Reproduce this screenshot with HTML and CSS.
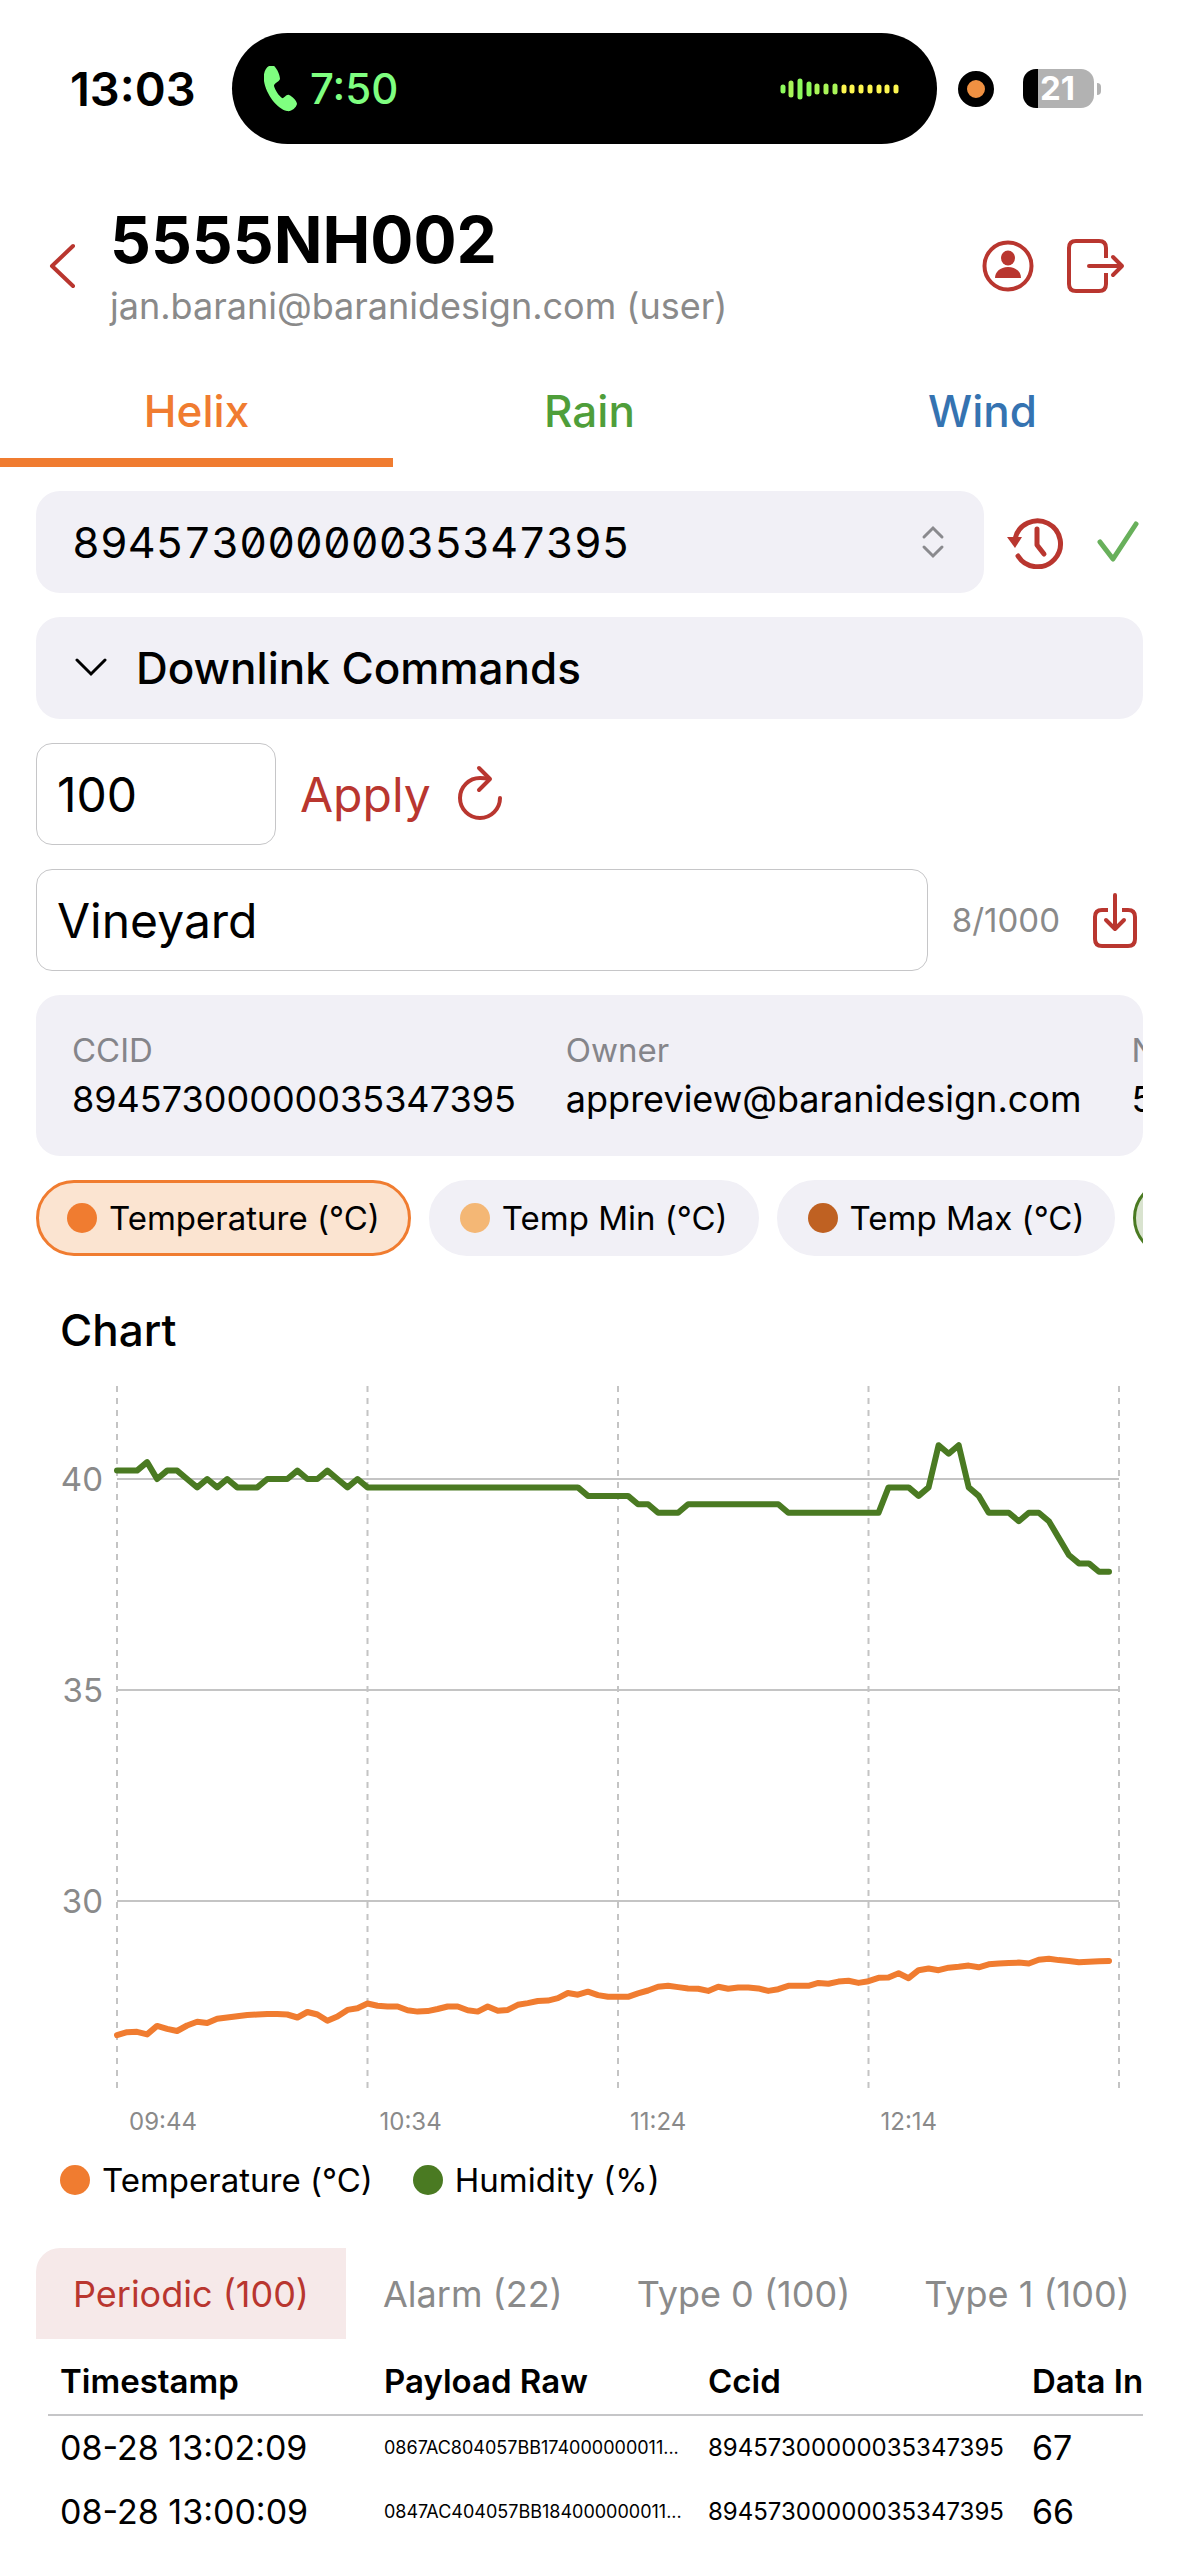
FILE: index.html
```html
<!DOCTYPE html>
<html lang="en">
<head>
  <meta charset="UTF-8">
  <title>5555NH002</title>
  <link rel="stylesheet" href="styles.css">
</head>
<body>

  <div class="status-bar">
    <span class="clock">13:03</span>
    <div class="island">
      <svg class="icon-phone" width="34" height="46" viewBox="0 0 34 46">
        <path d="M5 0C1 2-1 8 0 15c2 13 13 28 23 30 4 1 9-3 10-7 0-3-5-8-8-9-3-1-5 4-7 3-3-2-7-8-8-12 0-3 5-4 6-7 0-4-3-10-5-12-1-2-4-2-6-1z" fill="#7fff80"/>
      </svg>
      <span class="call-time">7:50</span>
      <svg class="wave" width="120" height="22" viewBox="0 0 120 22" stroke-width="5" stroke-linecap="round">
        <path d="M3 9v4M20 3v16M29 6v10" stroke="#8dfa5c"/>
        <path d="M11 5v12M37 8v6M46 8v6M55 8v6" stroke="#a9f558"/>
        <path d="M64 9v4M72 9v4M81 9v4M90 9v4M99 9v4M107 9v4M116 9v4" stroke="#fdf650"/>
      </svg>
    </div>
    <span class="mic-dot"></span>
    <div class="battery">
      <span class="battery-body">21</span>
      <span class="battery-tip"></span>
    </div>
  </div>

  <header class="header">
    <button class="icon-btn back" aria-label="Back">
      <svg width="28" height="48" viewBox="0 0 28 48"><path d="M25 4L4 24l21 20"/></svg>
    </button>
    <div class="titles">
      <h1>5555NH002</h1>
      <p>jan.barani@baranidesign.com (user)</p>
    </div>
    <button class="icon-btn" aria-label="Account">
      <svg width="54" height="54" viewBox="0 0 54 54">
        <circle cx="27" cy="27" r="23.500"/>
        <ellipse class="solid" cx="27" cy="19" rx="7" ry="7.500"/>
        <path class="solid" d="M14 39c0-6 5-11 13-11s13 5 13 11z"/>
      </svg>
    </button>
    <button class="icon-btn" aria-label="Sign out">
      <svg width="60" height="56" viewBox="0 0 60 56">
        <path d="M41 20V10q0-7-7-7H11q-7 0-7 7v36q0 7 7 7h23q7 0 7-7V35" stroke-linecap="butt"/>
        <path d="M24 28h33M48 19l9 9-9 9"/>
      </svg>
    </button>
  </header>

  <nav class="tabs">
    <button class="tab helix active">Helix</button>
    <button class="tab rain">Rain</button>
    <button class="tab wind">Wind</button>
  </nav>

  <main class="content">
    <div class="row">
      <div class="picker">
        <select aria-label="Device CCID">
          <option>89457300000035347395</option>
        </select>
        <svg width="26" height="36" viewBox="0 0 26 36"><path d="M4 13l9-9 9 9M4 23l9 9 9-9"/></svg>
      </div>
      <button class="icon-btn history" aria-label="History">
        <svg width="58" height="54" viewBox="0 0 58 54">
          <path d="M9 24a23 23 0 1 1 3 17"/>
          <path class="solid" d="M1 22h15l-7 11z"/>
          <path d="M31 14v16l7 9"/>
        </svg>
      </button>
      <svg class="check" width="44" height="44" viewBox="0 0 44 44"><path d="M4 22l13 17L40 4"/></svg>
    </div>

    <button class="panel disclosure">
      <svg width="34" height="20" viewBox="0 0 34 20"><path d="M3 2l14 14L31 2"/></svg>
      Downlink Commands
    </button>

    <div class="row">
      <input class="count" type="text" value="100" aria-label="Row count">
      <button class="apply">Apply</button>
      <button class="icon-btn refresh" aria-label="Refresh">
        <svg width="50" height="58" viewBox="0 0 50 58">
          <path d="M45 33a20 20 0 1 1-20-20q5 0 9 1"/>
          <path d="M24 3l11 11-11 11"/>
        </svg>
      </button>
    </div>

    <div class="row">
      <input class="note" type="text" value="Vineyard" aria-label="Note">
      <span class="counter">8/1000</span>
      <button class="icon-btn save" aria-label="Save note">
        <svg width="50" height="58" viewBox="0 0 50 58">
          <path d="M18 19h-6q-7 0-7 7v22q0 7 7 7h26q7 0 7-7V26q0-7-7-7h-6" stroke-linecap="butt"/>
          <path d="M25 4v33M16 29l9 9 9-9"/>
        </svg>
      </button>
    </div>

    <dl class="panel info">
      <div><dt>CCID</dt><dd>89457300000035347395</dd></div>
      <div><dt>Owner</dt><dd>appreview@baranidesign.com</dd></div>
      <div><dt>Name</dt><dd>5555NH002</dd></div>
    </dl>

    <div class="chips">
      <button class="chip on-orange"><span class="dot orange"></span>Temperature (°C)</button>
      <button class="chip"><span class="dot sand"></span>Temp Min (°C)</button>
      <button class="chip"><span class="dot brown"></span>Temp Max (°C)</button>
      <button class="chip on-green"><span class="dot green"></span>Humidity (%)</button>
    </div>

    <section class="chart">
      <h2>Chart</h2>
      <svg id="plot" viewBox="0 0 1107 764"></svg>
      <div class="legend">
        <span><i class="dot orange"></i>Temperature (°C)</span>
        <span><i class="dot green"></i>Humidity (%)</span>
      </div>
    </section>

    <div class="data-tabs">
      <button class="data-tab active">Periodic (100)</button>
      <button class="data-tab">Alarm (22)</button>
      <button class="data-tab">Type 0 (100)</button>
      <button class="data-tab">Type 1 (100)</button>
    </div>

    <div class="table-wrap">
      <table>
        <thead>
          <tr><th>Timestamp</th><th>Payload Raw</th><th>Ccid</th><th>Data Interval</th></tr>
        </thead>
        <tbody>
          <tr><td>08-28 13:02:09</td><td class="raw">0867AC804057BB174000000011...</td><td class="ccid">89457300000035347395</td><td>67</td></tr>
          <tr><td>08-28 13:00:09</td><td class="raw">0847AC404057BB184000000011...</td><td class="ccid">89457300000035347395</td><td>66</td></tr>
        </tbody>
      </table>
    </div>
  </main>

  <script>
    const temperature = [
      26.82, 26.89, 26.90, 26.84, 27.04, 26.97, 26.92, 27.05, 27.14, 27.11,
      27.21, 27.24, 27.27, 27.30, 27.31, 27.32, 27.32, 27.31, 27.24, 27.37,
      27.31, 27.16, 27.26, 27.42, 27.46, 27.57, 27.52, 27.50, 27.50, 27.41,
      27.38, 27.39, 27.44, 27.50, 27.50, 27.41, 27.38, 27.50, 27.40, 27.42,
      27.54, 27.58, 27.63, 27.64, 27.70, 27.82, 27.78, 27.85, 27.77, 27.73,
      27.73, 27.73, 27.81, 27.88, 27.97, 27.99, 27.96, 27.93, 27.92, 27.87,
      27.97, 27.92, 27.95, 27.95, 27.93, 27.87, 27.91, 27.99, 27.99, 27.99,
      28.06, 28.04, 28.09, 28.11, 28.06, 28.10, 28.18, 28.19, 28.29, 28.17,
      28.36, 28.40, 28.36, 28.42, 28.44, 28.47, 28.43, 28.50, 28.52, 28.53,
      28.54, 28.52, 28.61, 28.63, 28.60, 28.58, 28.55, 28.56, 28.57, 28.58
    ];
    const humidity = [
      40.2, 40.2, 40.2, 40.4, 40, 40.2, 40.2, 40, 39.8, 40,
      39.8, 40, 39.8, 39.8, 39.8, 40, 40, 40, 40.2, 40,
      40, 40.2, 40, 39.8, 40, ...Array(22).fill(39.8), 39.6, 39.6, 39.6,
      39.6, 39.6, 39.4, 39.4, 39.2, 39.2, 39.2, ...Array(10).fill(39.4),
      ...Array(10).fill(39.2), 39.8, 39.8, 39.8,
      39.6, 39.8, 40.8, 40.6, 40.8, 39.8, 39.6, 39.2, 39.2, 39.2,
      39, 39.2, 39.2, 39, 38.6, 38.2, 38, 38, 37.8, 37.8
    ];

    const plot = document.getElementById("plot");
    const left = 81, right = 1083, top0 = 4, bottom = 708;
    const x = i => left + i * (right - left) / 100;
    const y = v => 97 + (40 - v) * 42.2;

    function add(tag, attrs, text) {
      const el = document.createElementNS("http://www.w3.org/2000/svg", tag);
      for (const k in attrs) el.setAttribute(k, attrs[k]);
      if (text) el.textContent = text;
      plot.appendChild(el);
    }

    // grid and axis labels
    [40, 35, 30].forEach(v => {
      add("line", { class: "grid", x1: left, x2: right, y1: y(v), y2: y(v) });
      add("text", { class: "y-label", x: left - 14, y: y(v) + 12 }, String(v));
    });
    ["09:44", "10:34", "11:24", "12:14", ""].forEach((t, n) => {
      add("line", { class: "grid dashed", x1: x(n * 25), x2: x(n * 25), y1: top0, y2: bottom });
      add("text", { class: "x-label", x: x(n * 25) + 12, y: bottom + 40 }, t);
    });

    // series
    const points = data => data.map((v, i) => x(i).toFixed(1) + "," + y(v).toFixed(1)).join(" ");
    add("polyline", { class: "line temp", points: points(temperature) });
    add("polyline", { class: "line hum", points: points(humidity) });
  </script>

</body>
</html>
```
FILE: styles.css
```css
* {
  box-sizing: border-box;
}
body {
  margin: 0;
  min-height: 100vh;
  background: #fff;
  color: #000;
  font-family: Inter, "Noto Sans", sans-serif;
  font-size: 33px;
  overflow-x: hidden;
}
button, input, select {
  font-family: inherit;
  font-size: inherit;
  color: inherit;
  background: none;
  border: none;
  margin: 0;
  padding: 0;
}
button {
  cursor: pointer;
}
svg {
  display: block;
  flex-shrink: 0;
}

/* status bar */
.status-bar {
  display: flex;
  align-items: center;
  padding: 33px 78px 58px 70px;
}
.clock {
  width: 162px;
  font-size: 47px;
  font-weight: 600;
}
.island {
  flex: 1;
  display: flex;
  align-items: center;
  height: 111px;
  padding: 0 37px 0 32px;
  border-radius: 56px;
  background: #000;
}
.call-time {
  margin-left: 12px;
  font-size: 42px;
  font-weight: 500;
  color: #7fff80;
}
.wave {
  margin-left: auto;
}
.mic-dot {
  width: 36px;
  height: 36px;
  margin: 0 29px 0 21px;
  border: 9px solid #000;
  border-radius: 50%;
  background: #f09142;
}
.battery {
  display: flex;
  align-items: center;
  gap: 3px;
}
.battery-body {
  width: 71px;
  height: 39px;
  padding-left: 17px;
  border-radius: 13px;
  background: linear-gradient(to right, #000 15px, #b2b2b2 15px);
  color: #fff;
  font-size: 33px;
  font-weight: 700;
  line-height: 39px;
}
.battery-tip {
  width: 4px;
  height: 12px;
  border-radius: 0 6px 6px 0;
  background: #b2b2b2;
}

/* header */
.header {
  display: flex;
  align-items: center;
  padding: 0 54px 0 48px;
}
.icon-btn svg {
  fill: none;
  stroke: #b9362f;
  stroke-width: 4;
  stroke-linecap: round;
  stroke-linejoin: round;
}
.icon-btn .solid {
  fill: #b9362f;
  stroke: none;
}
.titles {
  flex: 1;
  margin-left: 34px;
}
h1 {
  margin: 0 0 4px;
  font-size: 64px;
  font-weight: 700;
  line-height: 76px;
}
.titles p {
  margin: 0;
  font-size: 36px;
  line-height: 48px;
  color: #8a8a8a;
}
.header .icon-btn + .icon-btn {
  margin-left: 30px;
}

/* device tabs */
.tabs {
  display: grid;
  grid-template-columns: repeat(3, 1fr);
  margin: 33px 0 24px;
}
.tab {
  height: 104px;
  border-bottom: 9px solid transparent;
  font-size: 44px;
  font-weight: 500;
}
.helix {
  color: #f07c30;
}
.rain {
  color: #4f9e3a;
}
.wind {
  color: #3573b1;
}
.tab.active {
  border-color: #f07c30;
}

.content {
  display: flex;
  flex-direction: column;
  gap: 24px;
  margin: 0 36px;
}
.row {
  display: flex;
  align-items: center;
}
.panel {
  border-radius: 24px;
  background: #f1f0f6;
}
.picker {
  flex: 1;
  display: flex;
  align-items: center;
  padding-right: 38px;
  border-radius: 24px;
  background: #f1f0f6;
}
.picker select {
  flex: 1;
  height: 102px;
  padding-left: 36px;
  appearance: none;
  font-size: 43px;
  font-feature-settings: "tnum", "zero";
}
.picker svg {
  fill: none;
  stroke: #8a8a8e;
  stroke-width: 3;
  stroke-linecap: round;
}
.history {
  margin: 0 32px 0 22px;
}
.history svg {
  stroke-width: 5;
}
.check {
  margin-right: 3px;
  fill: none;
  stroke: #68b05b;
  stroke-width: 5;
  stroke-linecap: round;
  stroke-linejoin: round;
}
.disclosure {
  display: flex;
  align-items: center;
  gap: 28px;
  height: 102px;
  padding: 0 38px;
  font-size: 44px;
  font-weight: 500;
}
.disclosure svg {
  fill: none;
  stroke: #000;
  stroke-width: 3;
  stroke-linecap: round;
}

/* inputs */
.count, .note {
  height: 102px;
  padding: 0 20px;
  border: 1px solid #c6c6c8;
  border-radius: 16px;
  font-size: 48px;
}
.count {
  width: 240px;
}
.note {
  flex: 1;
  min-width: 0;
}
.apply {
  margin: 0 24px;
  font-size: 48px;
  color: #b9362f;
}
.counter {
  margin: 0 30px 0 24px;
  color: #8a8a8a;
}
.save {
  margin-right: 3px;
}

.info {
  display: flex;
  gap: 50px;
  margin: 0;
  padding: 31px 36px 32px;
  overflow: hidden;
  white-space: nowrap;
}
.info dt {
  line-height: 48px;
  color: #85858a;
}
.info dd {
  margin: 0;
  font-size: 36px;
  line-height: 50px;
}

/* series chips */
.chips {
  display: flex;
  gap: 18px;
  overflow: hidden;
}
.chip {
  display: flex;
  flex-shrink: 0;
  align-items: center;
  gap: 12px;
  height: 76px;
  padding: 0 28px;
  border: 3px solid #f1f0f6;
  border-radius: 38px;
  background: #f1f0f6;
  white-space: nowrap;
}
.on-orange {
  border-color: #f07c30;
  background: #fbe4d1;
}
.on-green {
  border-color: #4a7a22;
  background: #d9e3cf;
}
.dot {
  width: 30px;
  height: 30px;
  border-radius: 50%;
}
.orange {
  background: #f07c30;
}
.sand {
  background: #f4b775;
}
.brown {
  background: #bf6122;
}
.green {
  background: #4a7a22;
}

/* chart */
.chart h2 {
  margin: 22px 24px 24px;
  font-size: 44px;
  font-weight: 500;
  line-height: 56px;
}
.chart svg {
  width: 100%;
}
.grid {
  stroke: #c4c4c4;
  stroke-width: 2;
}
.dashed {
  stroke-dasharray: 6 6;
}
.line {
  fill: none;
  stroke-width: 6;
  stroke-linecap: round;
  stroke-linejoin: round;
}
.temp {
  stroke: #f07c30;
}
.hum {
  stroke: #4a7a22;
}
.y-label {
  fill: #8a8a8a;
  font-size: 33px;
  text-anchor: end;
}
.x-label {
  fill: #8a8a8a;
  font-size: 24px;
}
.legend {
  display: flex;
  gap: 40px;
  padding: 12px 24px;
}
.legend span {
  display: flex;
  align-items: center;
  gap: 12px;
  line-height: 44px;
}

/* data table */
.data-tabs {
  display: flex;
  margin-top: 10px;
  overflow: hidden;
}
.data-tab {
  flex-shrink: 0;
  height: 91px;
  padding: 0 37px;
  font-size: 36px;
  color: #8a8a8a;
}
.data-tab.active {
  border-radius: 24px 0 0 0;
  background: #f6e9e9;
  color: #b9362f;
}
.table-wrap {
  margin: -16px 0 0 12px;
  overflow: hidden;
}
table {
  width: 1296px;
  table-layout: fixed;
  border-collapse: collapse;
}
th, td {
  height: 64px;
  padding: 0 12px;
  text-align: left;
  white-space: nowrap;
}
th {
  height: 68px;
  border-bottom: 2px solid #c6c6c8;
  font-weight: 600;
}
td {
  font-size: 34px;
}
.raw {
  font-size: 18px;
}
.ccid {
  font-size: 24px;
}
```
